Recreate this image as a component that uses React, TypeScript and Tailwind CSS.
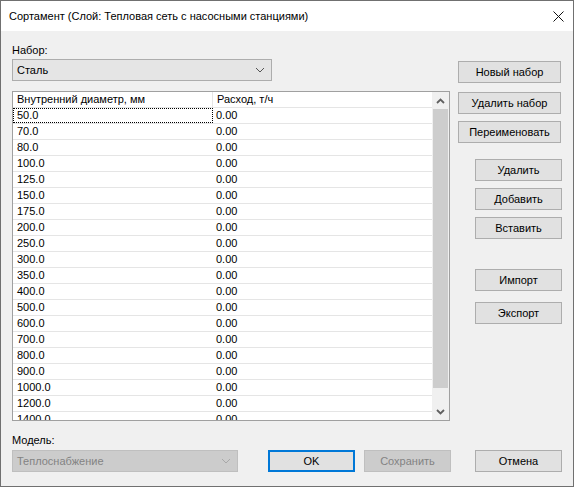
import React from "react";

const font = { fontFamily: '"Liberation Sans", Arial, sans-serif' };

const diameters = [
  "50.0", "70.0", "80.0", "100.0", "125.0", "150.0", "175.0", "200.0", "250.0", "300.0",
  "350.0", "400.0", "500.0", "600.0", "700.0", "800.0", "900.0", "1000.0", "1200.0", "1400.0",
];

function Button({
  label,
  className = "",
  disabled = false,
  primary = false,
}: {
  label: string;
  className?: string;
  disabled?: boolean;
  primary?: boolean;
}) {
  let look = "border border-[#adadad] bg-[#e1e1e1] text-black";
  if (disabled) look = "border border-[#bfbfbf] bg-[#cccccc] text-[#838383]";
  if (primary) look = "border-2 border-[#0078d7] bg-[#e1e1e1] text-black";
  return (
    <button
      type="button"
      className={`flex h-[22px] items-center justify-center text-[11px] leading-none ${look} ${className}`}
    >
      {label}
    </button>
  );
}

function Chevron({ up = false }: { up?: boolean }) {
  return (
    <svg width="9" height="6" viewBox="0 0 9 6">
      <path
        d={up ? "M1 5 L4.5 1.5 L8 5" : "M1 1 L4.5 4.5 L8 1"}
        fill="none"
        stroke="#606060"
        strokeWidth="1.8"
      />
    </svg>
  );
}

function Combo({ value, width, disabled = false }: { value: string; width: string; disabled?: boolean }) {
  return (
    <div
      className={`flex h-[22px] items-center justify-between pl-[4px] pr-[6px] text-[11px] ${width} ${
        disabled
          ? "border border-[#bfbfbf] bg-[#cccccc] text-[#838383]"
          : "border border-[#adadad] bg-[#e5e5e5] text-black"
      }`}
    >
      <span>{value}</span>
      <svg width="10" height="6" viewBox="0 0 10 6">
        <path d="M1 1 L5 5 L9 1" fill="none" stroke={disabled ? "#a8a8a8" : "#555"} strokeWidth="1" />
      </svg>
    </div>
  );
}

export default function App() {
  return (
    <div
      className="flex h-[487px] w-[574px] flex-col border border-[#707070] bg-[#f0f0f0] text-black"
      style={font}
    >
      <div className="flex h-[30px] items-center justify-between bg-white pl-[8px]">
        <span className="text-[11px]">Сортамент (Слой: Тепловая сеть с насосными станциями)</span>
        <svg width="11" height="11" viewBox="0 0 11 11" className="mr-[9px]">
          <path d="M0.5 0.5 L10.5 10.5 M10.5 0.5 L0.5 10.5" stroke="#111" strokeWidth="1" />
        </svg>
      </div>

      <div className="flex flex-col pl-[11px]">
        <div className="flex pt-[11px]">
          <div className="flex w-[438px] flex-col">
            <div className="h-[16px] text-[11px] leading-[16px]">Набор:</div>
            <div className="mt-[1px]">
              <Combo value="Сталь" width="w-[260px]" />
            </div>

            <div className="mt-[10px] flex h-[330px] border border-[#a0a0a0] bg-white">
              <div className="flex w-[419px] flex-col overflow-hidden text-[11px]">
                <div className="flex h-[16px] shrink-0 border-b border-[#e5e5e5] leading-[14px]">
                  <div className="w-[200px] border-r border-[#e5e5e5] pl-[4px]">Внутренний диаметр, мм</div>
                  <div className="pl-[4px]">Расход, т/ч</div>
                </div>
                {diameters.map((d, i) => (
                  <div key={d} className="flex h-[16px] shrink-0 border-b border-[#e5e5e5] leading-[13px]">
                    <div
                      className={`w-[200px] pl-[3px] ${
                        i === 0 ? "border border-dotted border-black" : "border border-transparent"
                      }`}
                    >
                      {d}
                    </div>
                    <div className="pl-[3px] pt-[1px]">0.00</div>
                  </div>
                ))}
              </div>
              <div className="flex w-[17px] flex-col bg-[#f0f0f0]">
                <div className="flex h-[17px] items-center justify-center">
                  <Chevron up />
                </div>
                <div className="mx-[1px] h-[279px] bg-[#cdcdcd]" />
                <div className="flex-1" />
                <div className="flex h-[17px] items-center justify-center">
                  <Chevron />
                </div>
              </div>
            </div>
          </div>

          <div className="ml-[8px] flex w-[104px] flex-col items-end pt-[19px]">
            <Button label="Новый набор" className="w-[103px] self-start" />
            <Button label="Удалить набор" className="mt-[9px] w-[103px] self-start" />
            <Button label="Переименовать" className="mt-[7px] w-[103px] self-start" />
            <Button label="Удалить" className="mt-[16px] w-[87px]" />
            <Button label="Добавить" className="mt-[7px] w-[87px]" />
            <Button label="Вставить" className="mt-[7px] w-[87px]" />
            <Button label="Импорт" className="mt-[30px] w-[87px]" />
            <Button label="Экспорт" className="mt-[11px] w-[87px]" />
          </div>
        </div>

        <div className="mt-[11px] h-[16px] text-[11px] leading-[16px]">Модель:</div>
        <div className="mt-[2px] flex">
          <Combo value="Теплоснабжение" width="w-[226px]" disabled />
          <Button label="OK" primary className="ml-[30px] w-[87px]" />
          <Button label="Сохранить" disabled className="ml-[9px] w-[87px]" />
          <Button label="Отмена" className="ml-[24px] w-[87px]" />
        </div>
      </div>
    </div>
  );
}
